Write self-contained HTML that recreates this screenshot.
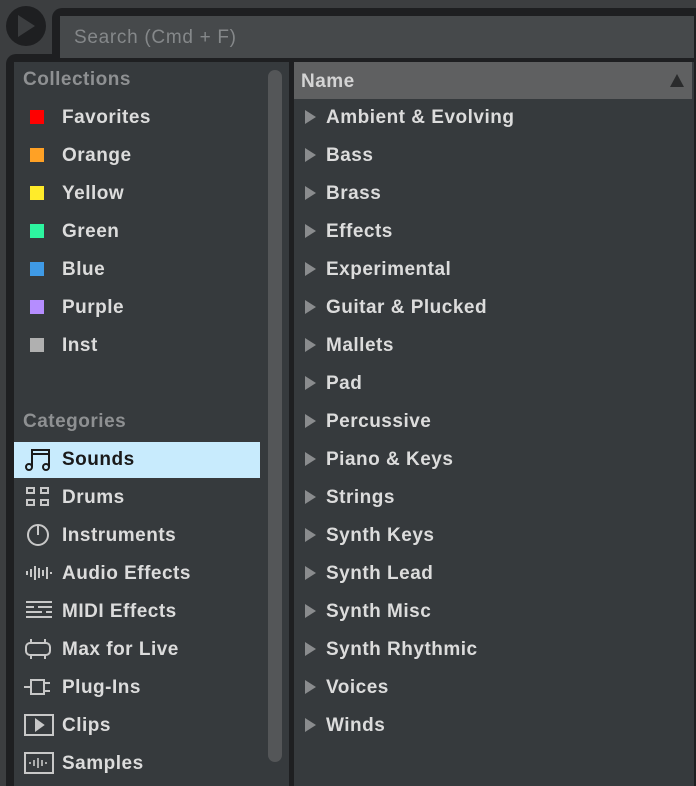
<!DOCTYPE html>
<html><head><style>
*{margin:0;padding:0;box-sizing:border-box}
body{width:696px;height:786px;background:#3c3e40;position:relative;overflow:hidden;font-family:"Liberation Sans",sans-serif;font-weight:bold;font-size:19px;letter-spacing:0.5px;color:#dcdcdc}
.a{position:absolute}
.row{position:absolute;height:36px;line-height:38px;white-space:nowrap}
.sq{position:absolute;left:30px;width:14px;height:14px}
.tri{position:absolute;left:305px;width:0;height:0;border-left:11px solid #8a8c8e;border-top:7px solid transparent;border-bottom:7px solid transparent}
svg{position:absolute;left:24px}
</style></head><body>
<div class="a" style="left:6px;top:6px;width:40px;height:40px;border-radius:50%;background:#1e1f21"></div>
<div class="a" style="left:18px;top:15px;width:0;height:0;border-left:17px solid #3c3e40;border-top:11px solid transparent;border-bottom:11px solid transparent"></div>
<div class="a" style="left:52px;top:8px;width:644px;height:60px;background:#1e1f21;border-radius:10px 0 0 0"></div>
<div class="a" style="left:6px;top:54px;width:690px;height:732px;background:#1e1f21;border-radius:10px 0 0 0"></div>
<div class="a" style="left:60px;top:16px;width:634px;height:42px;background:#46494b"></div>
<div class="a" style="left:74px;top:17px;line-height:42px;color:#85888a;font-weight:normal;font-size:19px;letter-spacing:0.7px">Search (Cmd + F)</div>
<div class="a" style="left:14px;top:62px;width:275px;height:724px;background:#363a3d"></div>
<div class="a" style="left:268px;top:70px;width:14px;height:692px;background:#545658;border-radius:7px"></div>
<div class="a" style="left:294px;top:62px;width:400px;height:724px;background:#363a3d"></div>
<div class="a" style="left:294px;top:62px;width:398px;height:37px;background:#5f6061"></div>
<div class="a" style="left:301px;top:62px;line-height:39px;color:#d4d4d4">Name</div>
<div class="a" style="left:670px;top:74px;width:0;height:0;border-bottom:13px solid #2a2b2c;border-left:7px solid transparent;border-right:7px solid transparent"></div>

<div class="a" style="left:23px;top:62px;line-height:36px;color:#8e9092">Collections</div>
<div class="sq" style="top:110px;background:#ff0000"></div><div class="row" style="left:62px;top:99px">Favorites</div>
<div class="sq" style="top:148px;background:#ffa125"></div><div class="row" style="left:62px;top:137px">Orange</div>
<div class="sq" style="top:186px;background:#ffeb2a"></div><div class="row" style="left:62px;top:175px">Yellow</div>
<div class="sq" style="top:224px;background:#2df5a0"></div><div class="row" style="left:62px;top:213px">Green</div>
<div class="sq" style="top:262px;background:#3f9ae6"></div><div class="row" style="left:62px;top:251px">Blue</div>
<div class="sq" style="top:300px;background:#b58dff"></div><div class="row" style="left:62px;top:289px">Purple</div>
<div class="sq" style="top:338px;background:#b0b0b0"></div><div class="row" style="left:62px;top:327px">Inst</div>

<div class="a" style="left:23px;top:403px;line-height:38px;color:#8e9092">Categories</div>
<div class="a" style="left:14px;top:442px;width:246px;height:36px;background:#c8ebfd"></div>
<div class="row" style="left:62px;top:441px;color:#1a1a1a">Sounds</div>
<div class="row" style="left:62px;top:479px">Drums</div>
<div class="row" style="left:62px;top:517px">Instruments</div>
<div class="row" style="left:62px;top:555px">Audio Effects</div>
<div class="row" style="left:62px;top:593px">MIDI Effects</div>
<div class="row" style="left:62px;top:631px">Max for Live</div>
<div class="row" style="left:62px;top:669px">Plug-Ins</div>
<div class="row" style="left:62px;top:707px">Clips</div>
<div class="row" style="left:62px;top:745px">Samples</div>

<svg style="top:447px" width="28" height="26" fill="none" stroke="#1a1a1a" stroke-width="2"><path d="M8 20V3h17v17M8 7h17"/><circle cx="5" cy="20" r="3"/><circle cx="22" cy="20" r="3"/></svg>
<svg style="top:485px" width="28" height="26" fill="none" stroke="#c8c8c8" stroke-width="2"><rect x="3" y="3" width="7" height="5"/><rect x="17" y="3" width="7" height="5"/><rect x="3" y="15" width="7" height="5"/><rect x="17" y="15" width="7" height="5"/></svg>
<svg style="top:523px" width="28" height="26" fill="none" stroke="#c8c8c8" stroke-width="2"><circle cx="14" cy="12" r="10"/><path d="M14 2v10"/></svg>
<svg style="top:561px" width="28" height="26" fill="none" stroke="#c8c8c8" stroke-width="2"><path d="M3 10v4M7 8v8M11 5v14M15 7v10M19 9v6M23 6v12M27 11v2"/></svg>
<svg style="top:599px" width="28" height="26" fill="none" stroke="#c8c8c8" stroke-width="2"><path d="M2 3h26M2 8h8M14 8h14M2 13h16M22 13h6M2 18h26"/></svg>
<svg style="top:637px" width="28" height="26" fill="none" stroke="#c8c8c8" stroke-width="2"><rect x="2" y="6" width="24" height="12" rx="4"/><path d="M7 2v4M21 2v4M7 18v4M21 18v4"/></svg>
<svg style="top:675px" width="30" height="26" fill="none" stroke="#c8c8c8" stroke-width="2"><path d="M0 12h7M7 5h13v14H7zM20 8h6M20 16h6"/></svg>
<svg style="top:713px" width="30" height="26" fill="none" stroke="#c8c8c8" stroke-width="2"><rect x="1" y="2" width="28" height="20"/><path d="M12 7v10l7-5z" fill="#c8c8c8"/></svg>
<svg style="top:751px" width="30" height="26" fill="none" stroke="#c8c8c8" stroke-width="2"><rect x="1" y="2" width="28" height="20"/><path d="M6 11v2M10 9v6M14 7v10M18 9v6M22 11v2" stroke-width="1.6"/></svg>

<div class="tri" style="top:110px"></div><div class="row" style="left:326px;top:99px">Ambient &amp; Evolving</div>
<div class="tri" style="top:148px"></div><div class="row" style="left:326px;top:137px">Bass</div>
<div class="tri" style="top:186px"></div><div class="row" style="left:326px;top:175px">Brass</div>
<div class="tri" style="top:224px"></div><div class="row" style="left:326px;top:213px">Effects</div>
<div class="tri" style="top:262px"></div><div class="row" style="left:326px;top:251px">Experimental</div>
<div class="tri" style="top:300px"></div><div class="row" style="left:326px;top:289px">Guitar &amp; Plucked</div>
<div class="tri" style="top:338px"></div><div class="row" style="left:326px;top:327px">Mallets</div>
<div class="tri" style="top:376px"></div><div class="row" style="left:326px;top:365px">Pad</div>
<div class="tri" style="top:414px"></div><div class="row" style="left:326px;top:403px">Percussive</div>
<div class="tri" style="top:452px"></div><div class="row" style="left:326px;top:441px">Piano &amp; Keys</div>
<div class="tri" style="top:490px"></div><div class="row" style="left:326px;top:479px">Strings</div>
<div class="tri" style="top:528px"></div><div class="row" style="left:326px;top:517px">Synth Keys</div>
<div class="tri" style="top:566px"></div><div class="row" style="left:326px;top:555px">Synth Lead</div>
<div class="tri" style="top:604px"></div><div class="row" style="left:326px;top:593px">Synth Misc</div>
<div class="tri" style="top:642px"></div><div class="row" style="left:326px;top:631px">Synth Rhythmic</div>
<div class="tri" style="top:680px"></div><div class="row" style="left:326px;top:669px">Voices</div>
<div class="tri" style="top:718px"></div><div class="row" style="left:326px;top:707px">Winds</div>
</body></html>
